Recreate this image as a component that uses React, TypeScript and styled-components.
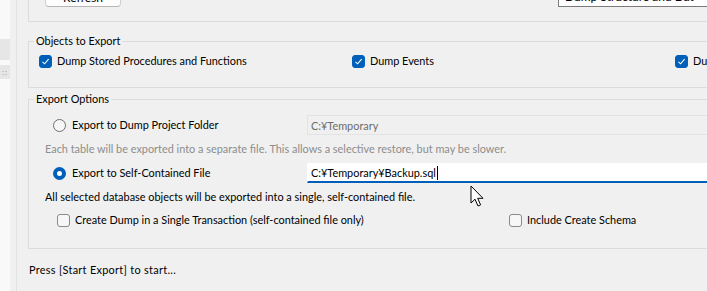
import { FC } from "react";
import styled, { createGlobalStyle } from "styled-components";

const GlobalStyle = createGlobalStyle`
  html, body {
    margin: 0;
    padding: 0;
    background: #f0f0f0;
  }
  body {
    font-family: Lato, "Noto Sans", "Liberation Sans", sans-serif;
    font-size: 10.9px;
    color: #000;
  }
`;

const CheckMark: FC = () => (
  <svg width="9" height="9" viewBox="0 0 9 9">
    <path d="M1.5 4.8 L3.6 6.8 L7.6 2.2" fill="none" stroke="#fff" strokeWidth="1.1" />
  </svg>
);

const CheckBox: FC<{ checked?: boolean; label: string }> = ({ checked, label }) => (
  <StyledCheckLabel>
    <StyledCheckBox $checked={checked}>{checked && <CheckMark />}</StyledCheckBox>
    <span>{label}</span>
  </StyledCheckLabel>
);

const Radio: FC<{ checked?: boolean; label: string }> = ({ checked, label }) => (
  <StyledCheckLabel>
    <StyledRadio $checked={checked} />
    <span>{label}</span>
  </StyledCheckLabel>
);

const App: FC = () => {
  return (
    <>
      <GlobalStyle />
      <StyledWindow>
        <StyledSidebar>
          <StyledSideRow $top={39} $height={21} />
          <StyledSideRow $top={5} $height={14}>
            <StyledGrip>::</StyledGrip>
          </StyledSideRow>
        </StyledSidebar>
        <StyledSplitter />
        <StyledMain>
          <StyledTopGroup>
            <StyledButton>Refresh</StyledButton>
            <StyledDropdown>
              <span>Dump Structure and Dat</span>
              <StyledChevron>▾</StyledChevron>
            </StyledDropdown>
          </StyledTopGroup>

          <StyledGroup $gap={11}>
            <StyledLegend>Objects to Export</StyledLegend>
            <StyledObjectsRow>
              <CheckBox checked label="Dump Stored Procedures and Functions" />
              <CheckBox checked label="Dump Events" />
              <CheckBox checked label="Dump Triggers" />
            </StyledObjectsRow>
          </StyledGroup>

          <StyledGroup $gap={3}>
            <StyledLegend>Export Options</StyledLegend>
            <StyledOptionRow $gap={8}>
              <Radio label="Export to Dump Project Folder" />
              <StyledTextBox $disabled>C:¥Temporary</StyledTextBox>
            </StyledOptionRow>
            <StyledNote $muted>
              Each table will be exported into a separate file. This allows a selective restore, but may be slower.
            </StyledNote>
            <StyledOptionRow $gap={6}>
              <Radio checked label="Export to Self-Contained File" />
              <StyledTextBox $active>
                C:¥Temporary¥Backup.sql
                <StyledCaret />
              </StyledTextBox>
            </StyledOptionRow>
            <StyledNote>
              All selected database objects will be exported into a single, self-contained file.
            </StyledNote>
            <StyledChecksRow>
              <CheckBox label="Create Dump in a Single Transaction (self-contained file only)" />
              <CheckBox label="Include Create Schema" />
            </StyledChecksRow>
          </StyledGroup>

          <StyledStatus>Press [Start Export] to start...</StyledStatus>
        </StyledMain>
        <StyledCursor width="16" height="24" viewBox="0 0 16 24">
          <path
            d="M1 1 L1 18 L5 14.2 L8 21 L10.6 19.9 L7.7 13.3 L13 13.3 Z"
            fill="#fff"
            stroke="#000"
            strokeWidth="1"
            strokeLinejoin="round"
          />
        </StyledCursor>
      </StyledWindow>
    </>
  );
};

export default App;

const StyledWindow = styled.div`
  position: relative;
  display: flex;
  width: 707px;
  height: 291px;
  overflow: hidden;
  background: #f0f0f0;
`;

const StyledSidebar = styled.div`
  width: 10px;
  flex-shrink: 0;
  background: #f9f9f9;
  display: flex;
  flex-direction: column;
`;

const StyledSideRow = styled.div<{ $top: number; $height: number }>`
  margin-top: ${(p) => p.$top}px;
  height: ${(p) => p.$height}px;
  background: #e6e6e6;
  display: flex;
  align-items: center;
  justify-content: center;
`;

const StyledGrip = styled.span`
  font-size: 8px;
  color: #9a9a9a;
  letter-spacing: 1px;
`;

const StyledSplitter = styled.div`
  width: 6px;
  flex-shrink: 0;
  background: #f0f0f0;
  border-right: 1px solid #e2e2e2;
`;

const StyledMain = styled.div`
  flex: 1;
  min-width: 0;
  padding-left: 11px;
  display: flex;
  flex-direction: column;
  overflow: hidden;
`;

const StyledTopGroup = styled.div`
  width: 699px;
  height: 52px;
  margin-top: -30px;
  flex-shrink: 0;
  border: 1px solid #dcdcdc;
  border-top: none;
  display: flex;
  align-items: flex-end;
  padding: 0 0 14px 16px;
  box-sizing: border-box;
`;

const StyledButton = styled.button`
  width: 76px;
  height: 23px;
  border: 1px solid #d0d0d0;
  border-bottom-color: #b5b5b5;
  border-radius: 4px;
  background: #fdfdfd;
  font-family: inherit;
  font-size: 12px;
  display: flex;
  align-items: flex-end;
  justify-content: center;
  line-height: 14px;
  padding: 0 0 1px 0;
  box-sizing: border-box;
`;

const StyledDropdown = styled.div`
  margin-left: 437px;
  width: 160px;
  height: 23px;
  border: 1px solid #7a7a7a;
  background: #fff;
  display: flex;
  align-items: flex-end;
  justify-content: space-between;
  padding: 0 8px 2px 6px;
  line-height: 14px;
  box-sizing: border-box;
  font-size: 12px;
  white-space: nowrap;
`;

const StyledChevron = styled.span`
  font-size: 9px;
  color: #555;
`;

const StyledGroup = styled.fieldset<{ $gap: number }>`
  width: 699px;
  margin: ${(p) => p.$gap}px 0 0 0;
  padding: 0;
  border: 1px solid #dcdcdc;
  box-sizing: border-box;
  flex-shrink: 0;
`;

const StyledLegend = styled.legend`
  margin-left: 5px;
  padding: 0 2px;
  font-size: inherit;
  line-height: 16px;
`;

const StyledObjectsRow = styled.div`
  display: grid;
  grid-template-columns: 313px 323px 1fr;
  align-items: center;
  height: 20px;
  padding: 2px 0 16px 10px;
`;

const StyledCheckLabel = styled.label`
  display: flex;
  align-items: center;
  gap: 5px;
  white-space: nowrap;
  line-height: 16px;
`;

const StyledCheckBox = styled.span<{ $checked?: boolean }>`
  width: 13px;
  height: 13px;
  box-sizing: border-box;
  border-radius: 3px;
  flex-shrink: 0;
  display: flex;
  align-items: center;
  justify-content: center;
  background: ${(p) => (p.$checked ? "#005fb8" : "#f7f7f7")};
  border: 1px solid ${(p) => (p.$checked ? "#005fb8" : "#8a8a8a")};
`;

const StyledRadio = styled.span<{ $checked?: boolean }>`
  width: 13px;
  height: 13px;
  box-sizing: border-box;
  border-radius: 50%;
  flex-shrink: 0;
  margin-right: 1px;
  background: ${(p) => (p.$checked ? "#fff" : "#f7f7f7")};
  border: ${(p) => (p.$checked ? "4px solid #005fb8" : "1px solid #6e6e6e")};
`;

const StyledOptionRow = styled.div<{ $gap: number }>`
  display: grid;
  grid-template-columns: 254px 1fr;
  align-items: center;
  padding-left: 24px;
  margin-top: ${(p) => p.$gap}px;
`;

const StyledTextBox = styled.div<{ $disabled?: boolean; $active?: boolean }>`
  height: 20px;
  box-sizing: border-box;
  display: flex;
  align-items: center;
  padding-left: 3px;
  white-space: nowrap;
  background: ${(p) => (p.$active ? "#fff" : "#f0f0f0")};
  color: ${(p) => (p.$disabled ? "#6d6d6d" : "#000")};
  border: 1px solid ${(p) => (p.$active ? "#fff" : "#e3e3e3")};
  border-bottom: ${(p) => (p.$active ? "2px solid #005fb8" : "1px solid #e3e3e3")};
`;

const StyledCaret = styled.span`
  width: 1px;
  height: 14px;
  background: #000;
  margin-left: 1px;
`;

const StyledNote = styled.div<{ $muted?: boolean }>`
  padding-left: 16px;
  margin-top: 6px;
  line-height: 16px;
  white-space: nowrap;
  color: ${(p) => (p.$muted ? "#8d8d8d" : "#000")};
`;

const StyledChecksRow = styled.div`
  display: grid;
  grid-template-columns: 452px 1fr;
  align-items: center;
  padding: 7px 0 20px 28px;
`;

const StyledStatus = styled.div`
  margin-top: 13px;
  padding-left: 1px;
  line-height: 16px;
  letter-spacing: 0.3px;
  white-space: nowrap;
`;

const StyledCursor = styled.svg`
  position: absolute;
  left: 470px;
  top: 185px;
`;
